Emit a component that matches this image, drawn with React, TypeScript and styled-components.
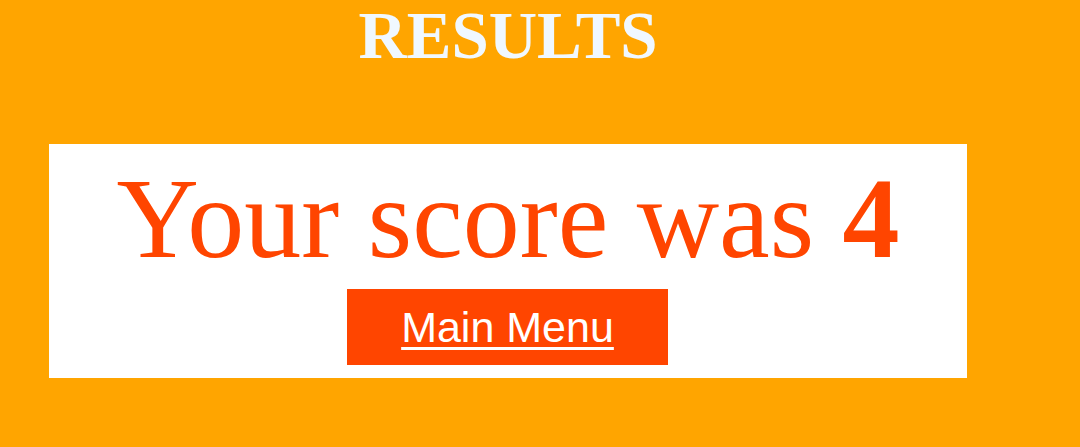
import React from "react";
import styled, { createGlobalStyle } from "styled-components";

const GlobalStyle = createGlobalStyle`
  html, body {
    margin: 0;
    padding: 0;
    background: #ffa500;
  }
  body {
    height: 447px;
    overflow: hidden;
  }
`;

const Page = styled.main`
  width: 1000px;
  margin-left: 8px;
  display: flex;
  flex-direction: column;
  align-items: center;
`;

const Title = styled.h1`
  margin: 0 0 73px;
  font-family: "Liberation Serif", "Times New Roman", serif;
  font-weight: bold;
  font-size: 67px;
  line-height: 71px;
  color: #f0f8ff;
  text-align: center;
`;

const Card = styled.section`
  width: 918px;
  background: #ffffff;
  display: flex;
  flex-direction: column;
  align-items: center;
  padding: 12px 0 13px;
  box-sizing: border-box;
  gap: 8px;
`;

const Score = styled.p`
  margin: 0;
  font-family: "Liberation Serif", "Times New Roman", serif;
  font-size: 114px;
  line-height: 125px;
  color: #ff4500;
  text-align: center;

  b {
    font-weight: bold;
  }
`;

const MenuButton = styled.a`
  display: flex;
  align-items: center;
  justify-content: center;
  width: 321px;
  height: 76px;
  margin-right: 1px;
  background: #ff4500;
  color: #ffffff;
  font-family: "Liberation Sans", Arial, sans-serif;
  font-size: 43px;
  text-decoration: underline;
  text-decoration-thickness: 3px;
  text-underline-offset: 5px;
  cursor: pointer;
`;

export default function App() {
  return (
    <>
      <GlobalStyle />
      <Page>
        <Title>RESULTS</Title>
        <Card>
          <Score>
            Your score was <b>4</b>
          </Score>
          <MenuButton href="#">Main Menu</MenuButton>
        </Card>
      </Page>
    </>
  );
}
